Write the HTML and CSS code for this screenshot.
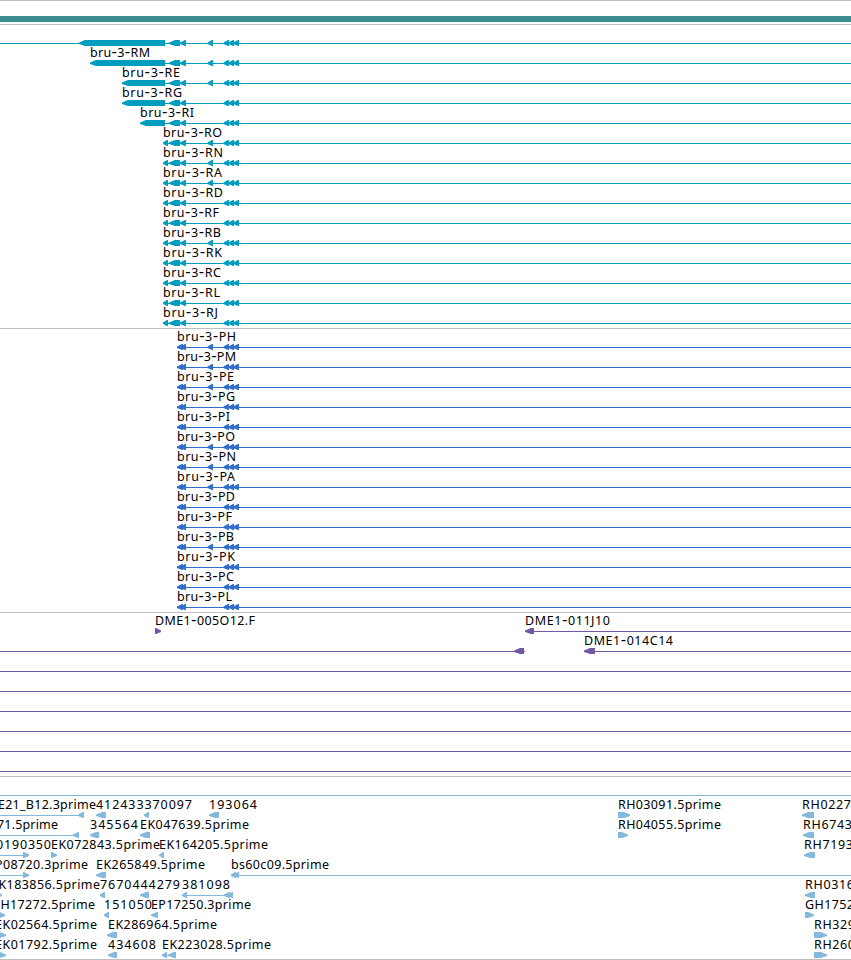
FILE: index.html
```html
<!DOCTYPE html>
<html lang="en">
<head>
<meta charset="utf-8">
<title>bru-3 region</title>
<link rel="stylesheet" href="styles.css">
</head>
<body>
<main class="browser">
  <header class="contig"><div class="contig-bar"></div></header>
  <section class="track transcripts" id="transcripts"></section>
  <section class="track proteins" id="proteins"></section>
  <section class="track clones" id="clones"></section>
  <section class="track ests" id="ests"></section>
</main>
<script src="tracks.js"></script>
</body>
</html>
```
FILE: styles.css
```css
body {
  margin: 0;
  background: #fff;
}

.browser {
  width: 851px;
  height: 960px;
  overflow: hidden;
  display: flex;
  flex-direction: column;
}

.contig {
  box-sizing: border-box;
  height: 25px;
  padding-top: 15px;
  border-top: 1px solid #bebebe;
  border-bottom: 1px solid #bebebe;
}

.contig-bar {
  height: 6px;
  background: #3d8d92;
}

.track {
  padding: 2px 0 1px;
  border-bottom: 1px solid #bebebe;
}

.transcripts { color: #009dbf; }
.proteins { color: #326dc9; }
.clones { color: #7458a6; }
.ests { color: #85b9dc; padding-bottom: 0; }

.row {
  display: block;
  width: 851px;
  height: 20px;
  overflow: visible;
}

.feature { fill: currentColor; }

.label {
  fill: #000;
  font: 12.5px "Noto Sans", "DejaVu Sans", sans-serif;
}

.dash { font-family: "DejaVu Sans", sans-serif; font-size: 15px; }
```
FILE: tracks.js
```js
const NS = "http://www.w3.org/2000/svg";
const END = 851;

function add(parent, name, attrs, text) {
  const el = document.createElementNS(NS, name);
  for (const key in attrs) el.setAttribute(key, attrs[key]);
  if (text) el.textContent = text;
  parent.appendChild(el);
  return el;
}

// Each row holds: lines [x1, x2], left and right arrows [x1, x2], labels [text, x1, x2].
function drawRow(track, row) {
  const svg = add(track, "svg", { class: "row", viewBox: "0 0 851 20" });
  for (const [a, b] of row.lines || []) {
    add(svg, "rect", { class: "feature", x: a, y: 16, width: b - a, height: 1 });
  }
  for (const [a, b] of row.left || []) {
    const head = Math.min(6, b - a - 1);
    add(svg, "path", { class: "feature", d: `M${a} 15.5L${a + head} 13H${b}V19H${a + head}L${a} 17Z` });
  }
  for (const [a, b] of row.right || []) {
    const head = Math.min(6, b - a - 1);
    add(svg, "path", { class: "feature", d: `M${b} 15.5L${b - head} 13H${a}V19H${b - head}L${b} 17Z` });
  }
  for (const [text, a, b] of row.labels || []) {
    const label = add(svg, "text", { class: "label", x: a, y: 10, textLength: b - a });
    for (const part of text.split(/(-)/)) {
      add(label, "tspan", part === "-" ? { class: "dash" } : {}, part);
    }
  }
}

const drawTrack = (id, rows) => rows.forEach(row => drawRow(document.getElementById(id), row));
const tail = [[223.5, 229], [228.5, 234], [233, 239]];
const middle = [[207.5, 213]];

drawTrack("transcripts", [
  ["", 79, 1], ["RM", 90, 1, 150], ["RE", 122, 1, 180], ["RG", 122, 0, 182], ["RI", 140, 0, 194],
  ["RO", 163, 1, 222], ["RN", 163, 1, 223], ["RA", 163, 1, 222], ["RD", 163, 0, 223], ["RF", 163, 0, 219],
  ["RB", 163, 1, 221], ["RK", 163, 0, 222], ["RC", 163, 0, 221], ["RL", 163, 0, 220], ["RJ", 163, 0, 218]
].map(([name, start, mid, end]) => ({
  lines: [[name ? start + 2 : 0, END]],
  left: [[start, start < 163 ? 165 : 168], [169, 180], [180, 186], ...(mid ? middle : []), ...tail],
  labels: name ? [["bru-3-" + name, start, end]] : []
})));

drawTrack("proteins", [
  ["PH", 1, 236], ["PM", 1, 236], ["PE", 1, 234], ["PG", 0, 235], ["PI", 0, 230], ["PO", 1, 235], ["PN", 1, 236],
  ["PA", 1, 235], ["PD", 0, 235], ["PF", 0, 232], ["PB", 1, 234], ["PK", 0, 235], ["PC", 0, 234], ["PL", 0, 232]
].map(([name, mid, end]) => ({
  lines: [[179, END]],
  left: [[177, 183], [181, 186], ...(mid ? middle : []), ...tail],
  labels: [["bru-3-" + name, 177, end]]
})));

drawTrack("clones", [
  { lines: [[527, END]], right: [[155, 161]], left: [[525, 534]],
    labels: [["DME1-005O12.F", 155, 255], ["DME1-011J10", 525, 610]] },
  { lines: [[0, 525], [586, END]], left: [[514, 524], [584, 595]], labels: [["DME1-014C14", 584, 673]] },
  ...Array.from({ length: 6 }, () => ({ lines: [[0, END]] }))
]);

drawTrack("ests", [
  { lines: [[0, END]] },
  { lines: [[0, 80]], left: [[78, 84], [96, 106], [144, 149], [209, 219], [802, 814]], right: [[618, 630]],
    labels: [["E21_B12.3prime", -2, 96], ["412433370097", 96, 192], ["193064", 209, 257],
      ["RH03091.5prime", 618, 721], ["RH0227", 802, 851]] },
  { lines: [[0, 75]], left: [[73, 79], [90, 99], [140, 150], [803, 814]], right: [[618, 628]],
    labels: [["71.5prime", -3, 58], ["345564", 90, 138], ["EK047639.5prime", 140, 249],
      ["RH04055.5prime", 618, 721], ["RH6743", 803, 852]] },
  { lines: [[0, 25]], left: [[159, 164], [804, 815]], right: [[23, 29], [51, 57]],
    labels: [["0190350", -4, 51], ["EK072843.5prime", 51, 160], ["EK164205.5prime", 159, 268], ["RH7193", 804, 853]] },
  { lines: [[0, 25], [233, END]], left: [[96, 106], [231, 236], [234, 239]], right: [[23, 29]],
    labels: [["P08720.3prime", -5, 88], ["EK265849.5prime", 96, 205], ["bs60c09.5prime", 231, 329]] },
  { lines: [[184, 232]], left: [[100, 105], [140, 149], [182, 187], [224, 230], [228, 233], [805, 815]], right: [[-4, 2]],
    labels: [["EK183856.5prime", -9, 100], ["7670444279", 100, 180], ["381098", 182, 230], ["RH0316", 805, 854]] },
  { left: [[104, 109], [151, 158]], right: [[-1, 5], [805, 814]],
    labels: [["GH17272.5prime", -9, 95], ["151050", 104, 152], ["EP17250.3prime", 151, 251], ["GH1752", 805, 854]] },
  { left: [[107, 117]], right: [[-3, 6], [814, 827]],
    labels: [["EK02564.5prime", -5, 97], ["EK286964.5prime", 108, 217], ["RH329", 814, 855]] },
  { lines: [[164, 172]], left: [[108, 117], [162, 167], [168, 176]], right: [[-3, 6], [814, 827]],
    labels: [["EK01792.5prime", -5, 97], ["434608", 108, 156], ["EK223028.5prime", 162, 271], ["RH260", 814, 855]] }
]);
```
